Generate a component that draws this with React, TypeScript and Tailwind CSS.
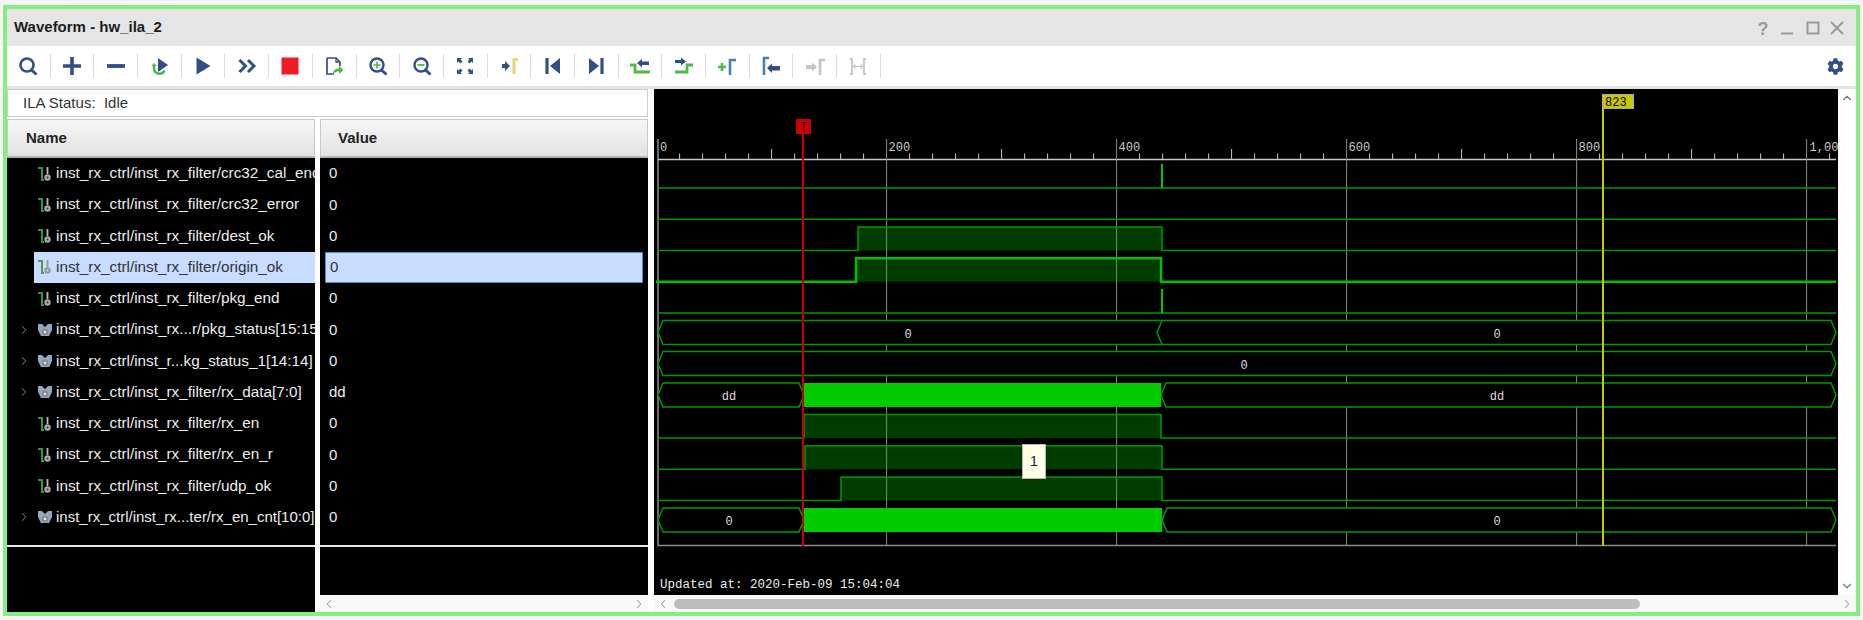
import { ChevronDown, ChevronLeft, ChevronRight, ChevronUp } from 'lucide-react'
import { FaCog } from 'react-icons/fa'
import type { ReactNode } from 'react'

const BLUE = '#2f4f85'
const GREEN = '#4cb848'
const GREY = '#c4c4c4'

const toolIcons: ReactNode[] = [
  <>
    <circle cx="9" cy="9" r="6.5" fill="none" stroke={BLUE} strokeWidth="2.6" />
    <path d="M13.5 14l5 4.5" stroke={BLUE} strokeWidth="3" />
  </>,
  <path d="M10 1v18M1 10h18" stroke={BLUE} strokeWidth="3.6" />,
  <path d="M1 10h18" stroke={BLUE} strokeWidth="3.8" />,
  <>
    <path d="M5 9v3.5a5.5 5.5 0 0 0 10.5 2" fill="none" stroke={GREEN} strokeWidth="2.6" />
    <path d="M2.5 10l2.5-3 2.5 3z" fill={GREEN} />
    <path d="M9 2l10 7-10 7z" fill={BLUE} />
  </>,
  <path d="M3.5 1.500l14 8.500-14 8.500z" fill={BLUE} />,
  <path d="M2.5 4l6 6-6 6M11 4l6 6-6 6" fill="none" stroke={BLUE} strokeWidth="3" />,
  <rect x="1.5" y="1.5" width="17" height="17" fill="#ee1c25" />,
  <>
    <path d="M3 2h9l4 4v4M3 2v16h7" fill="none" stroke={BLUE} strokeWidth="1.7" />
    <path d="M12 2v4h4" fill="none" stroke={BLUE} strokeWidth="1.3" />
    <path d="M9 18c0-4 3-5.500 6-5.500V10l4.500 4-4.500 4v-2.500c-2 0-4 .5-6 2.500z" fill={GREEN} />
  </>,
  <>
    <circle cx="9" cy="9" r="6.500" fill="none" stroke={BLUE} strokeWidth="2.400" />
    <path d="M9 5.500v7M5.500 9h7" stroke={GREEN} strokeWidth="1.600" />
    <path d="M13.500 14l5 4.500" stroke={BLUE} strokeWidth="3" />
  </>,
  <>
    <circle cx="9" cy="9" r="6.500" fill="none" stroke={BLUE} strokeWidth="2.400" />
    <path d="M5.500 9h7" stroke={GREEN} strokeWidth="1.800" />
    <path d="M13.500 14l5 4.500" stroke={BLUE} strokeWidth="3" />
  </>,
  <path
    d="M2 2h5l-1.500 1.500 2 2-2 2-2-2L2 7zM18 2h-5l1.500 1.500-2 2 2 2 2-2L18 7zM2 18h5l-1.500-1.500 2-2-2-2-2 2L2 13zM18 18h-5l1.500-1.500-2-2 2-2 2 2L18 13z"
    fill={BLUE}
  />,
  <>
    <path d="M3 8h3V5l5 5-5 5v-3H3z" fill={BLUE} />
    <path d="M15 18V3.500h4" fill="none" stroke="#e8d27a" strokeWidth="3" />
  </>,
  <>
    <path d="M4 2v16" stroke={BLUE} strokeWidth="3.200" />
    <path d="M17 2v16L7 10z" fill={BLUE} />
  </>,
  <>
    <path d="M16 2v16" stroke={BLUE} strokeWidth="3.200" />
    <path d="M3 2v16l10-8z" fill={BLUE} />
  </>,
  <>
    <path d="M0 9h5v7h15" fill="none" stroke={GREEN} strokeWidth="2.800" />
    <path d="M7 7l5-4v2.500h7v3.500h-7V11.500z" fill={BLUE} />
  </>,
  <>
    <path d="M1 16h12V9h6" fill="none" stroke={GREEN} strokeWidth="2.800" />
    <path d="M1 4h6V1.500l5 4-5 4V7H1z" fill={BLUE} />
  </>,
  <>
    <path d="M1 11h8M5 7v8" stroke={GREEN} strokeWidth="2.600" />
    <path d="M13 19V4h6" fill="none" stroke="#3d82b8" strokeWidth="2.600" />
  </>,
  <>
    <path d="M3 19V2h5" fill="none" stroke="#3d82b8" strokeWidth="2.600" />
    <path d="M6 12l5-4.500V10h8v4.500h-8V17z" fill={BLUE} />
  </>,
  <>
    <path d="M1 9h6V6.500l5 4.500-5 4.500V13H1z" fill={GREY} />
    <path d="M15 19V4h5" fill="none" stroke={GREY} strokeWidth="2.600" />
  </>,
  <>
    <path d="M2 3h2v15H2M18 3h-2v15h2" fill="none" stroke={GREY} strokeWidth="1.800" />
    <path d="M6 10.500h8M7.500 8.500l-2 2 2 2M12.500 8.500l2 2-2 2" fill="none" stroke={GREY} strokeWidth="1.200" />
  </>,
]

type Row = { name: string; value: string; bus?: boolean; selected?: boolean; narrow?: boolean }

const rows: Row[] = [
  { name: 'inst_rx_ctrl/inst_rx_filter/crc32_cal_end', value: '0' },
  { name: 'inst_rx_ctrl/inst_rx_filter/crc32_error', value: '0' },
  { name: 'inst_rx_ctrl/inst_rx_filter/dest_ok', value: '0' },
  { name: 'inst_rx_ctrl/inst_rx_filter/origin_ok', value: '0', selected: true },
  { name: 'inst_rx_ctrl/inst_rx_filter/pkg_end', value: '0' },
  { name: 'inst_rx_ctrl/inst_rx...r/pkg_status[15:15]', value: '0', bus: true },
  { name: 'inst_rx_ctrl/inst_r...kg_status_1[14:14]', value: '0', bus: true },
  { name: 'inst_rx_ctrl/inst_rx_filter/rx_data[7:0]', value: 'dd', bus: true },
  { name: 'inst_rx_ctrl/inst_rx_filter/rx_en', value: '0' },
  { name: 'inst_rx_ctrl/inst_rx_filter/rx_en_r', value: '0' },
  { name: 'inst_rx_ctrl/inst_rx_filter/udp_ok', value: '0' },
  { name: 'inst_rx_ctrl/inst_rx...ter/rx_en_cnt[10:0]', value: '0', bus: true, narrow: true },
]

function SignalIcon({ bus, dim }: { bus?: boolean; dim?: boolean }) {
  if (bus) {
    return (
      <svg viewBox="0 0 14 14" className="h-[14px] w-[14px] shrink-0">
        <path d="M0 1h4l3 3 3-3h4v6l-3 6H3L0 7z" fill="#8fa9bd" />
        <circle cx="7" cy="9" r="3.200" fill="#8a8a8a" />
        <circle cx="7" cy="9" r="1.200" fill="#eee" />
      </svg>
    )
  }
  return (
    <svg viewBox="0 0 14 16" className="h-4 w-[14px] shrink-0">
      <path d="M0 2h4v12h2" fill="none" stroke={dim ? '#4a9a58' : '#2f9a44'} strokeWidth="2" />
      <path d="M9.500 1v7" stroke={dim ? '#999' : '#bbb'} strokeWidth="1.800" />
      <circle cx="9.500" cy="11.500" r="3.200" fill={dim ? '#999' : '#aaa'} />
      <circle cx="9.500" cy="11.500" r="1" fill={dim ? '#ddd' : '#333'} />
    </svg>
  )
}

function HeaderCell({ label, indent }: { label: string; indent: string }) {
  return (
    <div
      className={`flex h-[39px] shrink-0 items-center border border-[#c8c8c8] border-b-2 border-b-[#b4b4b4] bg-gradient-to-b from-[#f6f6f6] to-[#e2e2e2] text-[15px] font-bold text-[#222] ${indent}`}
    >
      {label}
    </div>
  )
}

// waveform is drawn in page coordinates so numbers read straight off the screenshot
const LOW = '#009a00'
const BRIGHT = '#00c800'
const LEFT = 658
const RIGHT = 1836
const FALL = 1162

function baseline(i: number) {
  return 188 + i * 31.25
}

function tickX(v: number) {
  return 656.6 + v * 1.15
}

function Digital({ i, from, to, strong }: { i: number; from: number; to: number; strong?: boolean }) {
  const b = baseline(i)
  const h = b - 23.5
  const width = strong ? 2.500 : 1.500
  const color = strong ? '#00c000' : LOW
  return (
    <>
      <rect x={from} y={h} width={to - from} height={b - h} fill={BRIGHT} fillOpacity="0.3" />
      <path
        d={`M${strong ? 656 : LEFT} ${b}H${from}V${h}H${to}V${b}H${RIGHT}`}
        fill="none"
        stroke={color}
        strokeWidth={width}
      />
    </>
  )
}

function Pulse({ i }: { i: number }) {
  const b = baseline(i)
  return (
    <>
      <path d={`M${LEFT} ${b}H${RIGHT}`} stroke={LOW} strokeWidth="1.500" />
      <path d={`M${FALL} ${b - 24}V${b}`} stroke={BRIGHT} strokeWidth="2" />
    </>
  )
}

function Segment({
  top,
  from,
  to,
  label,
  labelX,
}: {
  top: number
  from: number
  to: number
  label?: string
  labelX?: number
}) {
  const bottom = top + 24
  const mid = top + 12
  return (
    <>
      <path
        d={`M${from} ${mid}L${from + 5} ${top}H${to - 5}L${to} ${mid}L${to - 5} ${bottom}H${from + 5}Z`}
        fill="#000"
        stroke={LOW}
        strokeWidth="1.500"
      />
      {label && (
        <text
          x={labelX ?? (from + to) / 2 - 2.500}
          y={mid + 5}
          textAnchor="middle"
          fill="#ddd"
          className="font-['Liberation_Mono',monospace] text-[12px]"
        >
          {label}
        </text>
      )}
    </>
  )
}

function Solid({ top, from, to }: { top: number; from: number; to: number }) {
  return <rect x={from} y={top} width={to - from} height={24} fill="#00cc00" />
}

function Waveform() {
  const minor: number[] = []
  for (let v = 20; v <= 1020; v += 20) {
    if (v % 200 !== 0) minor.push(v)
  }
  return (
    <svg viewBox="654 89 1184 506" className="block h-[506px] w-[1184px] shrink-0">
      <rect x="654" y="89" width="1184" height="506" fill="#000" />

      {/* ruler and grid */}
      <path d={`M${LEFT} 139V545.500H${RIGHT}`} fill="none" stroke="#8c8c8c" strokeWidth="1.500" />
      <path d={`M${LEFT} 159.500H${RIGHT}`} stroke="#c8c8c8" strokeWidth="1.500" />
      {minor.map((v) => (
        <path
          key={v}
          d={`M${tickX(v)} ${v % 100 === 0 ? 149 : 153.500}V159`}
          stroke="#c8c8c8"
          strokeWidth="1"
        />
      ))}
      {[200, 400, 600, 800, 1000].map((v) => (
        <path key={v} d={`M${tickX(v)} 139V545`} stroke="#8c8c8c" strokeWidth="1" />
      ))}
      {[
        ['0', 660],
        ['200', tickX(200) + 2],
        ['400', tickX(400) + 2],
        ['600', tickX(600) + 2],
        ['800', tickX(800) + 2],
        ['1,000', tickX(1000) + 3],
      ].map(([label, x]) => (
        <text
          key={label}
          x={x}
          y="151"
          fill="#ccc"
          className="font-['Liberation_Mono',monospace] text-[12px]"
        >
          {label}
        </text>
      ))}

      {/* signals */}
      <Pulse i={0} />
      <path d={`M${LEFT} ${baseline(1)}H${RIGHT}`} stroke={LOW} strokeWidth="1.500" />
      <Digital i={2} from={858} to={1162} />
      <Digital i={3} from={856} to={1161} strong />
      <Pulse i={4} />
      <Segment top={320.500} from={LEFT} to={1167} label="0" labelX={908} />
      <Segment top={320.500} from={1157} to={RIGHT} label="0" labelX={1497} />
      <Segment top={351.500} from={LEFT} to={RIGHT} label="0" labelX={1244} />
      <Segment top={383} from={LEFT} to={804} label="dd" labelX={729} />
      <Segment top={383} from={1161} to={RIGHT} label="dd" labelX={1497} />
      <Solid top={383} from={804} to={1161} />
      <Digital i={8} from={804} to={1161} />
      <Digital i={9} from={805} to={1162} />
      <Digital i={10} from={841} to={1162} />
      <Segment top={508} from={LEFT} to={804} label="0" labelX={729} />
      <Segment top={508} from={1162} to={RIGHT} label="0" labelX={1497} />
      <Solid top={508} from={804} to={1162} />

      {/* cursors */}
      <path d="M803 133V546" stroke="#c80000" strokeWidth="2" />
      <rect x="796" y="119" width="15" height="15" fill="#c80000" />
      <text x="800" y="131" fill="#300" className="font-['Liberation_Mono',monospace] text-[12px]">
        T
      </text>
      <path d="M1603 108V546" stroke="#c8c800" strokeWidth="2" />
      <rect x="1602.500" y="94.500" width="31" height="14" fill="#c8c800" stroke="#aaa" />
      <text x="1605" y="106" fill="#000" className="font-['Liberation_Mono',monospace] text-[12px]">
        823
      </text>

      <text
        x="660"
        y="588"
        fill="#eee"
        className="font-['Liberation_Mono',monospace] text-[12.5px]"
      >
        Updated at: 2020-Feb-09 15:04:04
      </text>
    </svg>
  )
}

export default function App() {
  return (
    <div className="h-[620px] w-full overflow-hidden bg-[#f5f5f5] pb-1 pl-[3px] pr-[3px] pt-[5px] font-['Liberation_Sans',sans-serif]">
      <div className="flex h-full flex-col border-4 border-[#86ee80] bg-white">
        {/* title bar */}
        <div className="flex h-[37px] shrink-0 items-center bg-[#e5e5e5] pl-[7px] pr-[12px]">
          <span className="text-[15px] font-bold text-[#1c1c1c]">Waveform - hw_ila_2</span>
          <div className="ml-auto flex items-center gap-[10px] text-[#9a9a9a]">
            <span className="w-[14px] pt-[2px] text-center text-[18px] font-bold leading-none">?</span>
            <svg viewBox="0 0 14 14" className="h-[14px] w-[14px]">
              <path d="M1 12.500h12" stroke="currentColor" strokeWidth="2" />
            </svg>
            <svg viewBox="0 0 14 14" className="ml-[2px] h-[14px] w-[14px]">
              <rect x="1.500" y="1.500" width="11" height="11" fill="none" stroke="currentColor" strokeWidth="2" />
            </svg>
            <svg viewBox="0 0 14 14" className="h-[14px] w-[14px]">
              <path d="M1 1l12 12M13 1L1 13" stroke="currentColor" strokeWidth="2" />
            </svg>
          </div>
        </div>

        {/* toolbar */}
        <div className="flex h-[43px] shrink-0 items-center border-b-[3px] border-[#e3e3e3] bg-white pr-[12px]">
          {toolIcons.map((icon, i) => (
            <div key={i} className="flex items-center">
              <div className="flex w-[42.700px] items-center justify-center">
                <svg viewBox="0 0 20 20" className="h-5 w-5">
                  {icon}
                </svg>
              </div>
              <div className="h-6 w-px bg-[#dcdcdc]" />
            </div>
          ))}
          <FaCog className="ml-auto h-[17px] w-[17px] text-[#2f4f85]" />
        </div>

        {/* panels */}
        <div className="flex min-h-0 flex-1">
          <div className="flex w-[641px] shrink-0 flex-col">
            <div className="flex h-[28px] shrink-0 items-center border border-[#cccccc] bg-white pl-[15px] text-[15px] text-[#333]">
              ILA Status:&nbsp; Idle
            </div>
            <div className="mt-[2px] flex min-h-0 flex-1 gap-[5px]">
              {/* name column */}
              <div className="flex w-[308px] shrink-0 flex-col">
                <HeaderCell label="Name" indent="pl-[18px]" />
                <div className="flex-1 bg-black">
                  <div className="h-[389px] border-b-2 border-[#e8e8e8]">
                    {rows.map((row) => (
                      <div key={row.name} className="flex h-[31.250px] items-center overflow-hidden whitespace-nowrap">
                        <div className="flex w-[27px] shrink-0 justify-end">
                          {row.bus && <ChevronRight className="mr-[3px] h-[14px] w-[14px] text-[#999]" strokeWidth={1.500} />}
                        </div>
                        <div
                          className={`flex h-full min-w-0 flex-1 items-center gap-[4px] overflow-hidden pl-[4px] ${
                            row.narrow ? 'text-[15px]' : 'text-[15.300px]'
                          } ${row.selected ? 'bg-[#c7dcfe] text-[#333]' : 'text-[#eeeeee]'}`}
                        >
                          <SignalIcon bus={row.bus} dim={row.selected} />
                          <span>{row.name}</span>
                        </div>
                      </div>
                    ))}
                  </div>
                </div>
              </div>

              {/* value column */}
              <div className="flex w-[328px] shrink-0 flex-col">
                <HeaderCell label="Value" indent="pl-[17px]" />
                <div className="flex-1 bg-black">
                  <div className="h-[389px] border-b-2 border-[#e8e8e8]">
                    {rows.map((row) => (
                      <div key={row.name} className="flex h-[31.250px] items-center pl-[5px] pr-[5px] text-[15px] text-[#eeeeee]">
                        <div
                          className={`flex h-full flex-1 items-center pl-[4px] ${
                            row.selected ? 'border border-[#4a8cc4] bg-[#c7dcfe] pl-[3px] text-[#333]' : ''
                          }`}
                        >
                          {row.value}
                        </div>
                      </div>
                    ))}
                  </div>
                </div>
                <div className="flex h-[17px] shrink-0 items-center justify-between bg-[#f8f8f8] pl-[2px] pr-[2px]">
                  <ChevronLeft className="h-[14px] w-[14px] text-[#777]" strokeWidth={1.500} />
                  <ChevronRight className="h-[14px] w-[14px] text-[#777]" strokeWidth={1.500} />
                </div>
              </div>
            </div>
          </div>

          {/* waveform column */}
          <div className="ml-[6px] flex min-w-0 flex-1 flex-col">
            <div className="relative flex h-[506px] shrink-0">
              <Waveform />
              <div className="flex flex-1 flex-col items-center justify-between bg-white py-[2px]">
                <ChevronUp className="h-[14px] w-[14px] text-[#777]" strokeWidth={2} />
                <ChevronDown className="h-[14px] w-[14px] text-[#777]" strokeWidth={2} />
              </div>
              <div className="absolute left-[368px] top-[355px] flex h-[35px] w-[24px] items-center justify-center border border-[#b8b8b8] bg-[#ffffe8] text-[15px] text-[#1a2a4a]">
                1
              </div>
            </div>
            <div className="flex flex-1 items-center bg-[#f8f8f8] pl-[2px] pr-[2px]">
              <ChevronLeft className="h-[14px] w-[14px] text-[#777]" strokeWidth={1.500} />
              <div className="ml-[4px] h-[10px] w-[966px] rounded-full bg-[#bdbdbd]" />
              <ChevronRight className="ml-auto h-[14px] w-[14px] text-[#777]" strokeWidth={1.500} />
            </div>
          </div>
        </div>
      </div>
    </div>
  )
}
